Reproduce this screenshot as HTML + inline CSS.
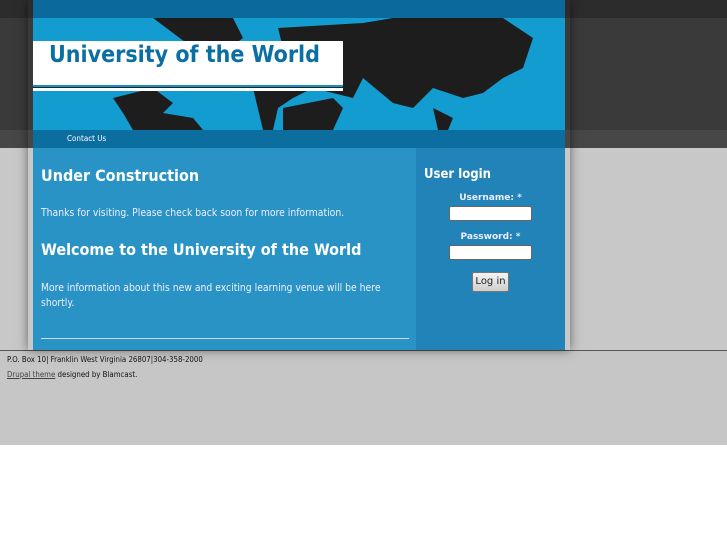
<!DOCTYPE html>
<html><head><style>
body{margin:0;width:727px;height:545px;background:#fff;font-family:"DejaVu Sans Condensed","DejaVu Sans","Liberation Sans",sans-serif;position:relative;overflow:hidden}
.a{position:absolute}
</style></head><body>
<div class="a" style="left:0;top:0;width:727px;height:18px;background:#2c2c2c"></div>
<div class="a" style="left:0;top:18px;width:727px;height:112px;background:#3a3a3a"></div>
<div class="a" style="left:0;top:130px;width:727px;height:18px;background:#474747"></div>
<div class="a" style="left:0;top:148px;width:727px;height:202px;background:#c8c8c8"></div>
<div class="a" style="left:0;top:350px;width:727px;height:95px;background:#c6c6c6;border-top:1px solid #555;box-sizing:border-box"></div>
<div class="a" style="left:28px;top:0;width:542px;height:350px;box-shadow:0 0 10px rgba(0,0,0,.5)"></div>
<div class="a" style="left:33px;top:0;width:532px;height:18px;background:#0b6a9b"></div>
<div class="a" style="left:33px;top:18px;width:532px;height:112px;background:#139ccf;overflow:hidden">
<svg width="532" height="112" style="position:absolute;left:0;top:0">
<path d="M120 0 L200 0 L210 20 L190 35 L160 30 L140 15 Z" fill="#1d1d1d"/>
<path d="M80 80 L120 70 L140 85 L130 95 L160 100 L170 112 L100 112 L90 95 Z" fill="#1d1d1d"/>
<path d="M245 10 L330 5 L360 0 L470 0 L500 20 L490 50 L470 60 L450 75 L430 80 L400 70 L380 90 L360 85 L330 60 L320 80 L300 75 L280 70 L260 80 L245 90 L240 112 L230 112 L220 70 L230 40 L250 30 Z" fill="#1d1d1d"/>
<path d="M250 90 L300 80 L310 90 L300 112 L250 112 Z" fill="#1d1d1d"/>
<path d="M400 90 L420 100 L415 112 L405 112 Z" fill="#1d1d1d"/>
</svg></div>
<div class="a" style="left:33px;top:41px;width:310px;height:44px;background:#fff"></div>
<div class="a" style="left:33px;top:85px;width:310px;height:2px;background:#1592c4"></div>
<div class="a" style="left:33px;top:87px;width:310px;height:1px;background:#222"></div>
<div class="a" style="left:33px;top:88px;width:310px;height:3px;background:#fff"></div>
<div class="a" style="left:49px;top:42px;font-size:23px;font-weight:bold;color:#0b6fa3">University of the World</div>
<div class="a" style="left:33px;top:130px;width:532px;height:18px;background:#0c6d9f"></div>
<div class="a" style="left:67px;top:134px;font-size:8px;color:#fff">Contact Us</div>
<div class="a" style="left:33px;top:148px;width:383px;height:202px;background:#2a93c5"></div>
<div class="a" style="left:416px;top:148px;width:149px;height:202px;background:#2283b8"></div>
<div class="a" style="left:41px;top:166px;font-size:16px;font-weight:bold;color:#fff">Under Construction</div>
<div class="a" style="left:41px;top:207px;font-size:10.3px;color:#eef">Thanks for visiting. Please check back soon for more information.</div>
<div class="a" style="left:41px;top:240px;font-size:16px;font-weight:bold;color:#fff">Welcome to the University of the World</div>
<div class="a" style="left:41px;top:281px;width:350px;font-size:10.3px;line-height:15px;color:#eef">More information about this new and exciting learning venue will be here shortly.</div>
<div class="a" style="left:41px;top:338px;width:368px;height:1px;background:#cde"></div>
<div class="a" style="left:424px;top:167px;font-size:13px;font-weight:bold;color:#fff">User login</div>
<div class="a" style="left:416px;top:193px;width:149px;text-align:center;font-size:9px;font-weight:bold;color:#eef;font-family:'DejaVu Sans',sans-serif">Username: *</div>
<div class="a" style="left:449px;top:206px;width:83px;height:15px;background:#fff;border:1px solid #666;box-sizing:border-box;border-radius:2px"></div>
<div class="a" style="left:416px;top:232px;width:149px;text-align:center;font-size:9px;font-weight:bold;color:#eef;font-family:'DejaVu Sans',sans-serif">Password: *</div>
<div class="a" style="left:449px;top:245px;width:83px;height:15px;background:#fff;border:1px solid #666;box-sizing:border-box;border-radius:2px"></div>
<div class="a" style="left:472px;top:272px;width:37px;height:20px;background:linear-gradient(#f4f4f4,#cfcfcf);border:1px solid #777;box-sizing:border-box;border-radius:2px;font-size:10px;text-align:center;line-height:18px;color:#222;font-family:'DejaVu Sans',sans-serif">Log in</div>
<div class="a" style="left:7px;top:355px;font-size:7.8px;color:#111">P.O. Box 10| Franklin West Virginia 26807|304-358-2000</div>
<div class="a" style="left:7px;top:370px;font-size:7.8px;color:#111"><span style="text-decoration:underline;color:#444">Drupal theme</span> designed by Blamcast.</div>
</body></html>
